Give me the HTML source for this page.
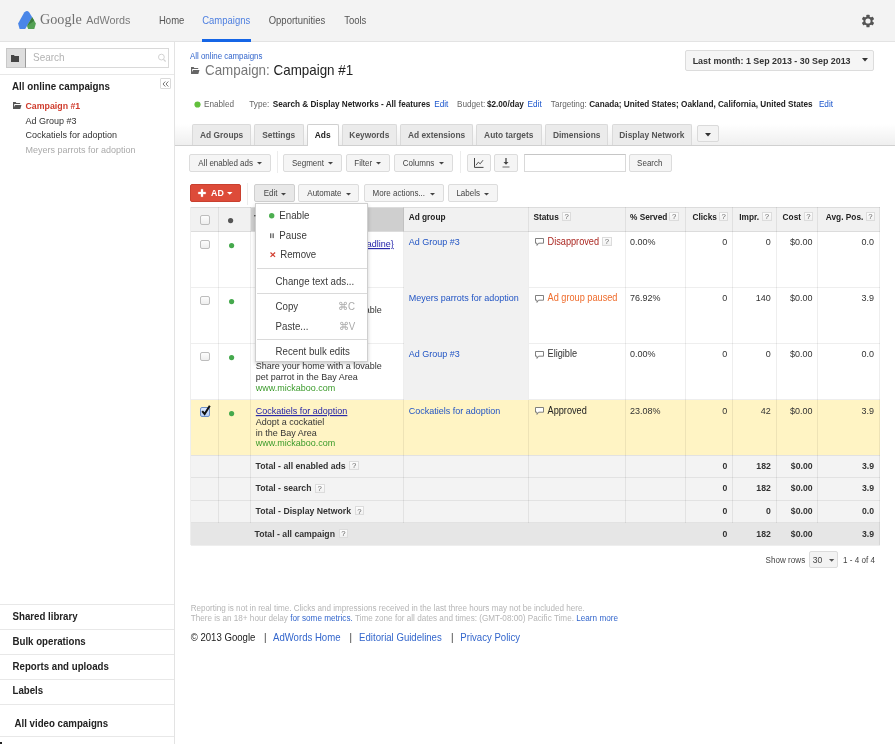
<!DOCTYPE html>
<html><head><meta charset="utf-8"><style>
html,body{margin:0;padding:0;}
body{width:895px;height:744px;position:relative;overflow:hidden;background:#fff;will-change:transform;font-family:"Liberation Sans",sans-serif;}
.t{position:absolute;white-space:nowrap;}
.r{position:absolute;box-sizing:border-box;}
svg{position:absolute;overflow:visible;}
</style></head><body>
<div class="r" style="left:0px;top:0px;width:895px;height:41px;background:#f3f3f3;"></div>
<div class="r" style="left:0px;top:41px;width:895px;height:1px;background:#e3e3e3;"></div>
<svg style="left:10px;top:5px" width="35" height="30" viewBox="0 0 35 30">
<path d="M14.2 7.6 Q16.7 4.6 19.3 7.4 L22.2 12.3 L15.2 23.9 L9.6 23.9 L8.1 18.6 Z" fill="#4a86e8"/>
<path d="M22.2 12.3 L25.9 18.6 L24.3 23.9 L18.1 23.9 L17.0 21.0 Z" fill="#54a154"/>
<path d="M22.2 12.3 L24.2 15.8 L17.6 20.6 L17.0 21.0 Z" fill="#3c7d3c"/>
</svg>
<div class="t" style="left:40.00px;top:10.21px;font-size:14.2px;line-height:18px;color:#707070;font-family:'Liberation Serif',serif;transform-origin:0 13.79px;">Google</div>
<div class="t" style="left:86.30px;top:13.26px;font-size:10.8px;line-height:14px;color:#7a7a7a;font-family:'Liberation Sans',sans-serif;transform:scaleY(1.04);transform-origin:0 10.74px;">AdWords</div>
<div class="t" style="left:159.00px;top:14.81px;font-size:9.5px;line-height:12px;color:#555;font-family:'Liberation Sans',sans-serif;transform:scaleY(1.09);transform-origin:0 9.29px;">Home</div>
<div class="t" style="left:202.20px;top:14.81px;font-size:9.5px;line-height:12px;color:#4d7fe0;font-family:'Liberation Sans',sans-serif;transform:scaleY(1.09);transform-origin:0 9.29px;">Campaigns</div>
<div class="t" style="left:268.70px;top:14.81px;font-size:9.5px;line-height:12px;color:#555;font-family:'Liberation Sans',sans-serif;transform:scaleY(1.09);transform-origin:0 9.29px;">Opportunities</div>
<div class="t" style="left:344.20px;top:14.81px;font-size:9.5px;line-height:12px;color:#555;font-family:'Liberation Sans',sans-serif;transform:scaleY(1.09);transform-origin:0 9.29px;">Tools</div>
<div class="r" style="left:202px;top:39px;width:48.5px;height:3px;background:#1565e6;"></div>
<svg style="left:860px;top:12.5px" width="16" height="16" viewBox="-8 -8 16 16">
<g fill="#555">
<circle r="4.6"/>
<rect x="-1.6" y="-6.3" width="3.2" height="12.6" rx="0.6"/>
<rect x="-1.6" y="-6.3" width="3.2" height="12.6" rx="0.6" transform="rotate(60)"/>
<rect x="-1.6" y="-6.3" width="3.2" height="12.6" rx="0.6" transform="rotate(120)"/>
</g><circle r="2.6" fill="#f3f3f3"/></svg>
<div class="r" style="left:174px;top:42px;width:1px;height:702px;background:#e3e3e3;"></div>
<div class="r" style="left:6px;top:48px;width:20px;height:20px;background:#dedede;border:1px solid #c9c9c9;border-right:1px solid #9a9a9a;"></div>
<div class="r" style="left:26px;top:48px;width:143px;height:20px;background:#fff;border:1px solid #d9d9d9;border-left:none;"></div>
<svg style="left:10.5px;top:55px" width="8" height="7" viewBox="0 0 8 7"><path d="M0 0 H3 L3.6 1 H8 V7 H0 Z" fill="#444"/></svg>
<div class="t" style="left:33.00px;top:50.53px;font-size:10px;line-height:13px;color:#b3b3b3;font-family:'Liberation Sans',sans-serif;transform:scaleY(1.09);transform-origin:0 9.97px;">Search</div>
<svg style="left:157px;top:53px" width="10" height="10" viewBox="0 0 10 10"><circle cx="4.4" cy="4.1" r="2.9" fill="none" stroke="#d2d2d2" stroke-width="1"/><path d="M6.5 6.3 L8.6 8.5" stroke="#d2d2d2" stroke-width="1.2"/></svg>
<div class="r" style="left:0px;top:74px;width:174px;height:1px;background:#e8e8e8;"></div>
<div class="r" style="left:160px;top:78px;width:11px;height:11px;border:1px solid #dadada;border-radius:1px;background:#fff;"></div>
<svg style="left:161.5px;top:80.5px" width="7" height="6" viewBox="0 0 7 6"><path d="M3.3 0.5 L1 3 L3.3 5.5 M6.3 0.5 L4 3 L6.3 5.5" fill="none" stroke="#666" stroke-width="0.9"/></svg>
<div class="t" style="left:12.00px;top:79.60px;font-size:9.8px;line-height:13px;color:#222;font-family:'Liberation Sans',sans-serif;font-weight:bold;transform:scaleY(1.09);transform-origin:0 9.90px;">All online campaigns</div>
<svg style="left:12.8px;top:102px" width="8.5" height="7" viewBox="0 0 8.5 7"><path d="M0 0 H2.6 L3.4 1.1 H7.2 V2.1 H1.2 V5 L2.2 2.9 H8.5 L7.3 7 H0 Z" fill="#555"/></svg>
<div class="t" style="left:25.50px;top:101.25px;font-size:8.8px;line-height:11px;color:#cf3b2c;font-family:'Liberation Sans',sans-serif;font-weight:bold;transform:scaleY(1.09);transform-origin:0 8.55px;">Campaign #1</div>
<div class="t" style="left:25.50px;top:114.88px;font-size:9.0px;line-height:12px;color:#333;font-family:'Liberation Sans',sans-serif;transform:scaleY(1.09);transform-origin:0 9.12px;">Ad Group #3</div>
<div class="t" style="left:25.50px;top:129.38px;font-size:9.0px;line-height:12px;color:#333;font-family:'Liberation Sans',sans-serif;transform:scaleY(1.09);transform-origin:0 9.12px;">Cockatiels for adoption</div>
<div class="t" style="left:25.50px;top:143.88px;font-size:9.0px;line-height:12px;color:#aaa;font-family:'Liberation Sans',sans-serif;transform:scaleY(1.09);transform-origin:0 9.12px;">Meyers parrots for adoption</div>
<div class="r" style="left:0px;top:604px;width:174px;height:1px;background:#e8e8e8;"></div>
<div class="r" style="left:0px;top:629px;width:174px;height:1px;background:#e8e8e8;"></div>
<div class="r" style="left:0px;top:654px;width:174px;height:1px;background:#e8e8e8;"></div>
<div class="r" style="left:0px;top:678.5px;width:174px;height:1.0px;background:#e8e8e8;"></div>
<div class="r" style="left:0px;top:703.5px;width:174px;height:1.0px;background:#e8e8e8;"></div>
<div class="r" style="left:0px;top:736px;width:174px;height:1px;background:#e8e8e8;"></div>
<div class="t" style="left:12.50px;top:610.24px;font-size:9.7px;line-height:13px;color:#222;font-family:'Liberation Sans',sans-serif;font-weight:bold;transform:scaleY(1.09);transform-origin:0 9.86px;">Shared library</div>
<div class="t" style="left:12.50px;top:634.84px;font-size:9.7px;line-height:13px;color:#222;font-family:'Liberation Sans',sans-serif;font-weight:bold;transform:scaleY(1.09);transform-origin:0 9.86px;">Bulk operations</div>
<div class="t" style="left:12.50px;top:659.54px;font-size:9.7px;line-height:13px;color:#222;font-family:'Liberation Sans',sans-serif;font-weight:bold;transform:scaleY(1.09);transform-origin:0 9.86px;">Reports and uploads</div>
<div class="t" style="left:12.50px;top:684.14px;font-size:9.7px;line-height:13px;color:#222;font-family:'Liberation Sans',sans-serif;font-weight:bold;transform:scaleY(1.09);transform-origin:0 9.86px;">Labels</div>
<div class="t" style="left:14.50px;top:717.24px;font-size:9.7px;line-height:13px;color:#222;font-family:'Liberation Sans',sans-serif;font-weight:bold;transform:scaleY(1.09);transform-origin:0 9.86px;">All video campaigns</div>
<div class="t" style="left:190.00px;top:51.86px;font-size:7.9px;line-height:10px;color:#3366cc;font-family:'Liberation Sans',sans-serif;transform:scaleY(1.09);transform-origin:0 7.74px;">All online campaigns</div>
<svg style="left:191px;top:67px" width="8.5" height="7" viewBox="0 0 8.5 7"><path d="M0 0 H2.6 L3.4 1.1 H7.2 V2.1 H1.2 V5 L2.2 2.9 H8.5 L7.3 7 H0 Z" fill="#666"/></svg>
<div class="t" style="left:205.00px;top:61.96px;font-size:13.4px;line-height:17px;color:#777;font-family:'Liberation Sans',sans-serif;transform:scaleY(1.09);transform-origin:0 13.14px;">Campaign:</div>
<div class="t" style="left:273.52px;top:61.96px;font-size:13.4px;line-height:17px;color:#222;font-family:'Liberation Sans',sans-serif;transform:scaleY(1.09);transform-origin:0 13.14px;">Campaign #1</div>
<div class="r" style="left:685px;top:50px;width:189px;height:21px;background:#f5f5f5;border:1px solid #dcdcdc;border-radius:2px;"></div>
<div class="t" style="left:692.70px;top:55.12px;font-size:8.9px;line-height:12px;color:#333;font-family:'Liberation Sans',sans-serif;font-weight:bold;transform:scaleY(1.09);transform-origin:0 9.08px;">Last month: 1 Sep 2013 - 30 Sep 2013</div>
<svg style="left:861.5px;top:58.3px" width="6" height="3.5" viewBox="0 0 6 3.5"><path d="M0 0 H6 L3 3.5 Z" fill="#333"/></svg>
<svg style="left:193.5px;top:101.3px" width="7" height="7" viewBox="0 0 7 7"><circle cx="3.5" cy="3.5" r="3.1" fill="#62c03c"/></svg>
<div class="t" style="left:204.00px;top:99.36px;font-size:8.2px;line-height:11px;color:#666;font-family:'Liberation Sans',sans-serif;transform:scaleY(1.09);transform-origin:0 8.34px;">Enabled</div>
<div class="t" style="left:249.30px;top:99.36px;font-size:8.2px;line-height:11px;color:#666;font-family:'Liberation Sans',sans-serif;transform:scaleY(1.09);transform-origin:0 8.34px;">Type:</div>
<div class="t" style="left:272.70px;top:99.36px;font-size:8.2px;line-height:11px;color:#222;font-family:'Liberation Sans',sans-serif;font-weight:bold;transform:scaleY(1.09);transform-origin:0 8.34px;">Search &amp; Display Networks - All features</div>
<div class="t" style="left:434.20px;top:99.36px;font-size:8.2px;line-height:11px;color:#1a55cc;font-family:'Liberation Sans',sans-serif;transform:scaleY(1.09);transform-origin:0 8.34px;">Edit</div>
<div class="t" style="left:457.00px;top:99.36px;font-size:8.2px;line-height:11px;color:#666;font-family:'Liberation Sans',sans-serif;transform:scaleY(1.09);transform-origin:0 8.34px;">Budget:</div>
<div class="t" style="left:486.90px;top:99.36px;font-size:8.2px;line-height:11px;color:#222;font-family:'Liberation Sans',sans-serif;font-weight:bold;transform:scaleY(1.09);transform-origin:0 8.34px;">$2.00/day</div>
<div class="t" style="left:527.60px;top:99.36px;font-size:8.2px;line-height:11px;color:#1a55cc;font-family:'Liberation Sans',sans-serif;transform:scaleY(1.09);transform-origin:0 8.34px;">Edit</div>
<div class="t" style="left:550.80px;top:99.36px;font-size:8.2px;line-height:11px;color:#666;font-family:'Liberation Sans',sans-serif;transform:scaleY(1.09);transform-origin:0 8.34px;">Targeting:</div>
<div class="t" style="left:589.20px;top:99.36px;font-size:8.2px;line-height:11px;color:#222;font-family:'Liberation Sans',sans-serif;font-weight:bold;transform:scaleY(1.09);transform-origin:0 8.34px;">Canada; United States; Oakland, California, United States</div>
<div class="t" style="left:818.90px;top:99.36px;font-size:8.2px;line-height:11px;color:#1a55cc;font-family:'Liberation Sans',sans-serif;transform:scaleY(1.09);transform-origin:0 8.34px;">Edit</div>
<div class="r" style="left:175px;top:124px;width:720px;height:21px;background:linear-gradient(#fff,#efefef);"></div>
<div class="r" style="left:175px;top:145px;width:720px;height:1px;background:#d0d0d0;"></div>
<div class="r" style="left:192px;top:124px;width:59px;height:21px;background:#ebebeb;border:1px solid #dadada;border-bottom:none;border-radius:2px 2px 0 0;"></div>
<div class="t" style="left:200.00px;top:129.79px;font-size:8.4px;line-height:11px;color:#555;font-weight:bold;transform:scaleY(1.09);transform-origin:50% 8.41px;">Ad Groups</div>
<div class="r" style="left:254px;top:124px;width:50px;height:21px;background:#ebebeb;border:1px solid #dadada;border-bottom:none;border-radius:2px 2px 0 0;"></div>
<div class="t" style="left:262.18px;top:129.79px;font-size:8.4px;line-height:11px;color:#555;font-weight:bold;transform:scaleY(1.09);transform-origin:50% 8.41px;">Settings</div>
<div class="r" style="left:307px;top:124px;width:32px;height:22px;background:#fff;border:1px solid #d0d0d0;border-bottom:none;border-radius:2px 2px 0 0;"></div>
<div class="t" style="left:314.72px;top:129.79px;font-size:8.4px;line-height:11px;color:#222;font-weight:bold;transform:scaleY(1.09);transform-origin:50% 8.41px;">Ads</div>
<div class="r" style="left:342px;top:124px;width:55px;height:21px;background:#ebebeb;border:1px solid #dadada;border-bottom:none;border-radius:2px 2px 0 0;"></div>
<div class="t" style="left:349.33px;top:129.79px;font-size:8.4px;line-height:11px;color:#555;font-weight:bold;transform:scaleY(1.09);transform-origin:50% 8.41px;">Keywords</div>
<div class="r" style="left:400px;top:124px;width:73px;height:21px;background:#ebebeb;border:1px solid #dadada;border-bottom:none;border-radius:2px 2px 0 0;"></div>
<div class="t" style="left:407.94px;top:129.79px;font-size:8.4px;line-height:11px;color:#555;font-weight:bold;transform:scaleY(1.09);transform-origin:50% 8.41px;">Ad extensions</div>
<div class="r" style="left:476px;top:124px;width:66px;height:21px;background:#ebebeb;border:1px solid #dadada;border-bottom:none;border-radius:2px 2px 0 0;"></div>
<div class="t" style="left:484.11px;top:129.79px;font-size:8.4px;line-height:11px;color:#555;font-weight:bold;transform:scaleY(1.09);transform-origin:50% 8.41px;">Auto targets</div>
<div class="r" style="left:545px;top:124px;width:63px;height:21px;background:#ebebeb;border:1px solid #dadada;border-bottom:none;border-radius:2px 2px 0 0;"></div>
<div class="t" style="left:552.94px;top:129.79px;font-size:8.4px;line-height:11px;color:#555;font-weight:bold;transform:scaleY(1.09);transform-origin:50% 8.41px;">Dimensions</div>
<div class="r" style="left:612px;top:124px;width:80px;height:21px;background:#ebebeb;border:1px solid #dadada;border-bottom:none;border-radius:2px 2px 0 0;"></div>
<div class="t" style="left:619.32px;top:129.79px;font-size:8.4px;line-height:11px;color:#555;font-weight:bold;transform:scaleY(1.09);transform-origin:50% 8.41px;">Display Network</div>
<div class="r" style="left:697px;top:125px;width:22px;height:17px;background:#f3f3f3;border:1px solid #dadada;border-radius:2px;"></div>
<svg style="left:705px;top:132.5px" width="6" height="3.5" viewBox="0 0 6 3.5"><path d="M0 0 H6 L3 3.5 Z" fill="#333"/></svg>
<div class="r" style="left:189px;top:154px;width:82px;height:18px;background:#f5f5f5;border:1px solid #dcdcdc;border-radius:2px;"></div>
<div class="t" style="left:198.30px;top:158.83px;font-size:8.0px;line-height:10px;color:#444;font-family:'Liberation Sans',sans-serif;transform:scaleY(1.09);transform-origin:0 7.77px;">All enabled ads</div>
<svg style="left:257px;top:161.8px" width="5" height="2.5" viewBox="0 0 6 3"><path d="M0 0 H6 L3 3 Z" fill="#444"/></svg>
<div class="r" style="left:276.5px;top:151px;width:1.0px;height:22px;background:#ececec;"></div>
<div class="r" style="left:283px;top:154px;width:59px;height:18px;background:#f5f5f5;border:1px solid #dcdcdc;border-radius:2px;"></div>
<div class="t" style="left:291.90px;top:158.83px;font-size:8.0px;line-height:10px;color:#444;font-family:'Liberation Sans',sans-serif;transform:scaleY(1.09);transform-origin:0 7.77px;">Segment</div>
<svg style="left:327.6px;top:161.8px" width="5" height="2.5" viewBox="0 0 6 3"><path d="M0 0 H6 L3 3 Z" fill="#444"/></svg>
<div class="r" style="left:346px;top:154px;width:44px;height:18px;background:#f5f5f5;border:1px solid #dcdcdc;border-radius:2px;"></div>
<div class="t" style="left:354.30px;top:158.83px;font-size:8.0px;line-height:10px;color:#444;font-family:'Liberation Sans',sans-serif;transform:scaleY(1.09);transform-origin:0 7.77px;">Filter</div>
<svg style="left:376.1px;top:161.8px" width="5" height="2.5" viewBox="0 0 6 3"><path d="M0 0 H6 L3 3 Z" fill="#444"/></svg>
<div class="r" style="left:394px;top:154px;width:59px;height:18px;background:#f5f5f5;border:1px solid #dcdcdc;border-radius:2px;"></div>
<div class="t" style="left:402.80px;top:158.83px;font-size:8.0px;line-height:10px;color:#444;font-family:'Liberation Sans',sans-serif;transform:scaleY(1.09);transform-origin:0 7.77px;">Columns</div>
<svg style="left:438.7px;top:161.8px" width="5" height="2.5" viewBox="0 0 6 3"><path d="M0 0 H6 L3 3 Z" fill="#444"/></svg>
<div class="r" style="left:459.6px;top:151px;width:1.0px;height:22px;background:#ececec;"></div>
<div class="r" style="left:467px;top:154px;width:24px;height:18px;background:#f5f5f5;border:1px solid #dcdcdc;border-radius:2px;"></div>
<svg style="left:473.5px;top:157.5px" width="10" height="10" viewBox="0 0 10 10"><path d="M0.5 0 V9.4 H9.5" fill="none" stroke="#444" stroke-width="1"/><path d="M2 7.2 L4.3 4.2 L6.2 5.8 L9 2.2" fill="none" stroke="#444" stroke-width="0.9"/></svg>
<div class="r" style="left:494px;top:154px;width:24px;height:18px;background:#f5f5f5;border:1px solid #dcdcdc;border-radius:2px;"></div>
<svg style="left:502px;top:157.5px" width="8" height="10" viewBox="0 0 8 10"><path d="M4 0 V5" stroke="#444" stroke-width="1.3"/><path d="M1.5 4 H6.5 L4 6.8 Z" fill="#444"/><path d="M0.5 9 H7.5" stroke="#777" stroke-width="1.1"/></svg>
<div class="r" style="left:524px;top:154px;width:102px;height:18px;background:#fff;border:1px solid #d9d9d9;border-top-color:#c6c6c6;"></div>
<div class="r" style="left:629px;top:154px;width:43px;height:18px;background:#f5f5f5;border:1px solid #dcdcdc;border-radius:2px;"></div>
<div class="t" style="left:637.10px;top:158.83px;font-size:8.0px;line-height:10px;color:#444;font-family:'Liberation Sans',sans-serif;transform:scaleY(1.09);transform-origin:0 7.77px;">Search</div>
<div class="r" style="left:190px;top:184px;width:51px;height:18px;background:#dd4b39;border:1px solid #c9402f;border-radius:2px;"></div>
<svg style="left:198.4px;top:189.3px" width="8" height="8" viewBox="0 0 8 8"><path d="M3 0.3 H5 V3 H7.7 V5 H5 V7.7 H3 V5 H0.3 V3 H3 Z" fill="#fff" stroke="#fff" stroke-width="0.3" stroke-linejoin="round"/></svg>
<div class="t" style="left:211.10px;top:188.25px;font-size:8.8px;line-height:11px;color:#fff;font-family:'Liberation Sans',sans-serif;font-weight:bold;transform:scaleY(1.09);transform-origin:0 8.55px;">AD</div>
<svg style="left:227.2px;top:192px" width="5.5" height="2.75" viewBox="0 0 6 3"><path d="M0 0 H6 L3 3 Z" fill="#fff"/></svg>
<div class="r" style="left:247.3px;top:182.7px;width:1.0px;height:22.100000000000023px;background:#ececec;"></div>
<div class="r" style="left:254px;top:184px;width:41px;height:18px;background:#e8e8e8;border:1px solid #cfcfcf;border-radius:2px;"></div>
<div class="t" style="left:263.70px;top:188.73px;font-size:8.0px;line-height:10px;color:#444;font-family:'Liberation Sans',sans-serif;transform:scaleY(1.09);transform-origin:0 7.77px;">Edit</div>
<svg style="left:280.6px;top:192.8px" width="5" height="2.5" viewBox="0 0 6 3"><path d="M0 0 H6 L3 3 Z" fill="#444"/></svg>
<div class="r" style="left:298px;top:184px;width:61px;height:18px;background:#f5f5f5;border:1px solid #dcdcdc;border-radius:2px;"></div>
<div class="t" style="left:307.30px;top:188.73px;font-size:8.0px;line-height:10px;color:#444;font-family:'Liberation Sans',sans-serif;transform:scaleY(1.09);transform-origin:0 7.77px;">Automate</div>
<svg style="left:346px;top:192.8px" width="5" height="2.5" viewBox="0 0 6 3"><path d="M0 0 H6 L3 3 Z" fill="#444"/></svg>
<div class="r" style="left:364px;top:184px;width:80px;height:18px;background:#f5f5f5;border:1px solid #dcdcdc;border-radius:2px;"></div>
<div class="t" style="left:372.60px;top:188.73px;font-size:8.0px;line-height:10px;color:#444;font-family:'Liberation Sans',sans-serif;transform:scaleY(1.09);transform-origin:0 7.77px;">More actions...</div>
<svg style="left:429.6px;top:192.8px" width="5" height="2.5" viewBox="0 0 6 3"><path d="M0 0 H6 L3 3 Z" fill="#444"/></svg>
<div class="r" style="left:448px;top:184px;width:50px;height:18px;background:#f5f5f5;border:1px solid #dcdcdc;border-radius:2px;"></div>
<div class="t" style="left:456.40px;top:188.73px;font-size:8.0px;line-height:10px;color:#444;font-family:'Liberation Sans',sans-serif;transform:scaleY(1.09);transform-origin:0 7.77px;">Labels</div>
<svg style="left:483.9px;top:192.8px" width="5" height="2.5" viewBox="0 0 6 3"><path d="M0 0 H6 L3 3 Z" fill="#444"/></svg>
<div class="r" style="left:190.5px;top:207px;width:689.0px;height:24.30000000000001px;background:#f1f1f1;"></div>
<div class="r" style="left:250.5px;top:207px;width:153.10000000000002px;height:24.30000000000001px;background:#cfcfcf;"></div>
<div class="r" style="left:190.5px;top:231.3px;width:689.0px;height:168.5px;background:#fff;"></div>
<div class="r" style="left:403.6px;top:231.3px;width:124.89999999999998px;height:168.5px;background:#f1f1f1;"></div>
<div class="r" style="left:190.5px;top:399.8px;width:689.0px;height:55.19999999999999px;background:#fff4c4;"></div>
<div class="r" style="left:190.5px;top:455px;width:689.0px;height:67.60000000000002px;background:#f3f3f3;"></div>
<div class="r" style="left:190.5px;top:522.6px;width:689.0px;height:22.5px;background:#e6e6e6;"></div>
<div class="r" style="left:190.5px;top:207px;width:689.0px;height:1px;background:#dcdcdc;"></div>
<div class="r" style="left:190.5px;top:231px;width:689.0px;height:1px;background:#dcdcdc;"></div>
<div class="r" style="left:190.5px;top:287.0px;width:213.10000000000002px;height:1.0px;background:rgba(0,0,0,0.065);"></div>
<div class="r" style="left:528.5px;top:287.0px;width:351.0px;height:1.0px;background:rgba(0,0,0,0.065);"></div>
<div class="r" style="left:190.5px;top:343.0px;width:213.10000000000002px;height:1.0px;background:rgba(0,0,0,0.065);"></div>
<div class="r" style="left:528.5px;top:343.0px;width:351.0px;height:1.0px;background:rgba(0,0,0,0.065);"></div>
<div class="r" style="left:190.5px;top:399.3px;width:213.10000000000002px;height:1.0px;background:rgba(0,0,0,0.065);"></div>
<div class="r" style="left:528.5px;top:399.3px;width:351.0px;height:1.0px;background:rgba(0,0,0,0.065);"></div>
<div class="r" style="left:190.5px;top:454.5px;width:689.0px;height:1.0px;background:rgba(0,0,0,0.065);"></div>
<div class="r" style="left:190.5px;top:477.0px;width:689.0px;height:1.0px;background:rgba(0,0,0,0.065);"></div>
<div class="r" style="left:190.5px;top:499.8px;width:689.0px;height:1.0px;background:rgba(0,0,0,0.065);"></div>
<div class="r" style="left:190.5px;top:522.1px;width:689.0px;height:1.0px;background:rgba(0,0,0,0.065);"></div>
<div class="r" style="left:190.0px;top:207px;width:1.0px;height:315.6px;background:rgba(0,0,0,0.065);"></div>
<div class="r" style="left:218.1px;top:207px;width:1.0px;height:315.6px;background:rgba(0,0,0,0.065);"></div>
<div class="r" style="left:250.0px;top:207px;width:1.0px;height:315.6px;background:rgba(0,0,0,0.065);"></div>
<div class="r" style="left:403.1px;top:207px;width:1.0px;height:315.6px;background:rgba(0,0,0,0.065);"></div>
<div class="r" style="left:528.0px;top:207px;width:1.0px;height:315.6px;background:rgba(0,0,0,0.065);"></div>
<div class="r" style="left:625.0px;top:207px;width:1.0px;height:315.6px;background:rgba(0,0,0,0.065);"></div>
<div class="r" style="left:684.9px;top:207px;width:1.0px;height:315.6px;background:rgba(0,0,0,0.065);"></div>
<div class="r" style="left:731.9px;top:207px;width:1.0px;height:315.6px;background:rgba(0,0,0,0.065);"></div>
<div class="r" style="left:775.6px;top:207px;width:1.0px;height:315.6px;background:rgba(0,0,0,0.065);"></div>
<div class="r" style="left:816.9px;top:207px;width:1.0px;height:315.6px;background:rgba(0,0,0,0.065);"></div>
<div class="r" style="left:879.0px;top:207px;width:1.0px;height:315.6px;background:rgba(0,0,0,0.065);"></div>
<div class="r" style="left:190.0px;top:522.6px;width:1.0px;height:22.5px;background:rgba(0,0,0,0.065);"></div>
<div class="r" style="left:879.0px;top:522.6px;width:1.0px;height:22.5px;background:rgba(0,0,0,0.065);"></div>
<div class="r" style="left:190.5px;top:544.6px;width:689.0px;height:1.0px;background:rgba(0,0,0,0.065);"></div>
<div class="r" style="left:200px;top:215px;width:10px;height:10px;background:linear-gradient(#fdfdfd,#eeeeee);border:1px solid #bdbdbd;border-radius:2px;"></div>
<svg style="left:228.1px;top:217.8px" width="5.2" height="5.2" viewBox="0 0 5.2 5.2"><circle cx="2.6" cy="2.6" r="2.6" fill="#555"/></svg>
<div class="t" style="left:408.70px;top:212.22px;font-size:8.3px;line-height:11px;color:#222;font-family:'Liberation Sans',sans-serif;font-weight:bold;transform:scaleY(1.09);transform-origin:0 8.38px;">Ad group</div>
<div class="t" style="left:533.40px;top:212.22px;font-size:8.3px;line-height:11px;color:#222;font-family:'Liberation Sans',sans-serif;font-weight:bold;transform:scaleY(1.09);transform-origin:0 8.38px;">Status</div>
<div class="r" style="left:562px;top:212px;width:9px;height:9px;border:1px solid #dcdcdc;background:linear-gradient(#fdfdfd,#f1f1f1);"></div>
<div class="t" style="left:564.38px;top:212.40px;font-size:7.8px;line-height:10px;color:#666;transform-origin:50% 7.70px;">?</div>
<div class="t" style="left:630.00px;top:212.22px;font-size:8.3px;line-height:11px;color:#222;font-family:'Liberation Sans',sans-serif;font-weight:bold;transform:scaleY(1.09);transform-origin:0 8.38px;">% Served</div>
<div class="r" style="left:669px;top:212px;width:10px;height:9px;border:1px solid #dcdcdc;background:linear-gradient(#fdfdfd,#f1f1f1);"></div>
<div class="t" style="left:671.88px;top:212.40px;font-size:7.8px;line-height:10px;color:#666;transform-origin:50% 7.70px;">?</div>
<div class="t" style="left:692.50px;top:212.22px;font-size:8.3px;line-height:11px;color:#222;font-family:'Liberation Sans',sans-serif;font-weight:bold;transform:scaleY(1.09);transform-origin:0 8.38px;">Clicks</div>
<div class="r" style="left:719px;top:212px;width:9px;height:9px;border:1px solid #dcdcdc;background:linear-gradient(#fdfdfd,#f1f1f1);"></div>
<div class="t" style="left:721.48px;top:212.40px;font-size:7.8px;line-height:10px;color:#666;transform-origin:50% 7.70px;">?</div>
<div class="t" style="left:739.30px;top:212.22px;font-size:8.3px;line-height:11px;color:#222;font-family:'Liberation Sans',sans-serif;font-weight:bold;transform:scaleY(1.09);transform-origin:0 8.38px;">Impr.</div>
<div class="r" style="left:762px;top:212px;width:10px;height:9px;border:1px solid #dcdcdc;background:linear-gradient(#fdfdfd,#f1f1f1);"></div>
<div class="t" style="left:764.78px;top:212.40px;font-size:7.8px;line-height:10px;color:#666;transform-origin:50% 7.70px;">?</div>
<div class="t" style="left:782.60px;top:212.22px;font-size:8.3px;line-height:11px;color:#222;font-family:'Liberation Sans',sans-serif;font-weight:bold;transform:scaleY(1.09);transform-origin:0 8.38px;">Cost</div>
<div class="r" style="left:804px;top:212px;width:9px;height:9px;border:1px solid #dcdcdc;background:linear-gradient(#fdfdfd,#f1f1f1);"></div>
<div class="t" style="left:806.28px;top:212.40px;font-size:7.8px;line-height:10px;color:#666;transform-origin:50% 7.70px;">?</div>
<div class="t" style="left:825.80px;top:212.22px;font-size:8.3px;line-height:11px;color:#222;font-family:'Liberation Sans',sans-serif;font-weight:bold;transform:scaleY(1.09);transform-origin:0 8.38px;">Avg. Pos.</div>
<div class="r" style="left:866px;top:212px;width:9px;height:9px;border:1px solid #dcdcdc;background:linear-gradient(#fdfdfd,#f1f1f1);"></div>
<div class="t" style="left:868.28px;top:212.40px;font-size:7.8px;line-height:10px;color:#666;transform-origin:50% 7.70px;">?</div>
<div class="r" style="left:200px;top:240px;width:10px;height:9px;background:linear-gradient(#fdfdfd,#eeeeee);border:1px solid #bdbdbd;border-radius:2px;"></div>
<svg style="left:229.0px;top:243.10000000000002px" width="5.2" height="5.2" viewBox="0 0 5.2 5.2"><circle cx="2.6" cy="2.6" r="2.6" fill="#45a94d"/></svg>
<div class="t" style="left:408.70px;top:236.28px;font-size:9.0px;line-height:12px;color:#2255c4;font-family:'Liberation Sans',sans-serif;transform:scaleY(1.09);transform-origin:0 9.12px;">Ad Group #3</div>
<svg style="left:535.2px;top:238.3px" width="9" height="8" viewBox="0 0 9 8"><path d="M0.5 0.5 H8.5 V5.2 H3.6 L2 7.4 V5.2 H0.5 Z" fill="#fff" stroke="#6a6a6a" stroke-width="0.85" stroke-linejoin="round"/></svg>
<div class="t" style="left:547.50px;top:236.21px;font-size:9.2px;line-height:12px;color:#ab2822;font-family:'Liberation Sans',sans-serif;transform:scaleY(1.09);transform-origin:0 9.19px;">Disapproved</div>
<div class="r" style="left:602px;top:237px;width:10px;height:9px;border:1px solid #dcdcdc;background:linear-gradient(#fdfdfd,#f1f1f1);"></div>
<div class="t" style="left:604.78px;top:236.90px;font-size:7.8px;line-height:10px;color:#666;transform-origin:50% 7.70px;">?</div>
<div class="t" style="left:630.00px;top:236.28px;font-size:9.0px;line-height:12px;color:#333;font-family:'Liberation Sans',sans-serif;transform:scaleY(1.09);transform-origin:0 9.12px;">0.00%</div>
<div class="t" style="right:167.70px;top:236.28px;font-size:9.0px;line-height:12px;color:#333;transform:scaleY(1.09);transform-origin:100% 9.12px;">0</div>
<div class="t" style="right:124.20px;top:236.28px;font-size:9.0px;line-height:12px;color:#333;transform:scaleY(1.09);transform-origin:100% 9.12px;">0</div>
<div class="t" style="right:82.40px;top:236.28px;font-size:9.0px;line-height:12px;color:#333;transform:scaleY(1.09);transform-origin:100% 9.12px;">$0.00</div>
<div class="t" style="right:20.90px;top:236.28px;font-size:9.0px;line-height:12px;color:#333;transform:scaleY(1.09);transform-origin:100% 9.12px;">0.0</div>
<div class="r" style="left:200px;top:296px;width:10px;height:9px;background:linear-gradient(#fdfdfd,#eeeeee);border:1px solid #bdbdbd;border-radius:2px;"></div>
<svg style="left:229.0px;top:299.29999999999995px" width="5.2" height="5.2" viewBox="0 0 5.2 5.2"><circle cx="2.6" cy="2.6" r="2.6" fill="#45a94d"/></svg>
<div class="t" style="left:408.70px;top:292.48px;font-size:9.0px;line-height:12px;color:#2255c4;font-family:'Liberation Sans',sans-serif;transform:scaleY(1.09);transform-origin:0 9.12px;">Meyers parrots for adoption</div>
<svg style="left:535.2px;top:294.5px" width="9" height="8" viewBox="0 0 9 8"><path d="M0.5 0.5 H8.5 V5.2 H3.6 L2 7.4 V5.2 H0.5 Z" fill="#fff" stroke="#6a6a6a" stroke-width="0.85" stroke-linejoin="round"/></svg>
<div class="t" style="left:547.50px;top:292.41px;font-size:9.2px;line-height:12px;color:#ef6c2c;font-family:'Liberation Sans',sans-serif;transform:scaleY(1.09);transform-origin:0 9.19px;">Ad group paused</div>
<div class="t" style="left:630.00px;top:292.48px;font-size:9.0px;line-height:12px;color:#333;font-family:'Liberation Sans',sans-serif;transform:scaleY(1.09);transform-origin:0 9.12px;">76.92%</div>
<div class="t" style="right:167.70px;top:292.48px;font-size:9.0px;line-height:12px;color:#333;transform:scaleY(1.09);transform-origin:100% 9.12px;">0</div>
<div class="t" style="right:124.20px;top:292.48px;font-size:9.0px;line-height:12px;color:#333;transform:scaleY(1.09);transform-origin:100% 9.12px;">140</div>
<div class="t" style="right:82.40px;top:292.48px;font-size:9.0px;line-height:12px;color:#333;transform:scaleY(1.09);transform-origin:100% 9.12px;">$0.00</div>
<div class="t" style="right:20.90px;top:292.48px;font-size:9.0px;line-height:12px;color:#333;transform:scaleY(1.09);transform-origin:100% 9.12px;">3.9</div>
<div class="r" style="left:200px;top:352px;width:10px;height:9px;background:linear-gradient(#fdfdfd,#eeeeee);border:1px solid #bdbdbd;border-radius:2px;"></div>
<svg style="left:229.0px;top:355.29999999999995px" width="5.2" height="5.2" viewBox="0 0 5.2 5.2"><circle cx="2.6" cy="2.6" r="2.6" fill="#45a94d"/></svg>
<div class="t" style="left:408.70px;top:348.48px;font-size:9.0px;line-height:12px;color:#2255c4;font-family:'Liberation Sans',sans-serif;transform:scaleY(1.09);transform-origin:0 9.12px;">Ad Group #3</div>
<svg style="left:535.2px;top:350.5px" width="9" height="8" viewBox="0 0 9 8"><path d="M0.5 0.5 H8.5 V5.2 H3.6 L2 7.4 V5.2 H0.5 Z" fill="#fff" stroke="#6a6a6a" stroke-width="0.85" stroke-linejoin="round"/></svg>
<div class="t" style="left:547.50px;top:348.41px;font-size:9.2px;line-height:12px;color:#333;font-family:'Liberation Sans',sans-serif;transform:scaleY(1.09);transform-origin:0 9.19px;">Eligible</div>
<div class="t" style="left:630.00px;top:348.48px;font-size:9.0px;line-height:12px;color:#333;font-family:'Liberation Sans',sans-serif;transform:scaleY(1.09);transform-origin:0 9.12px;">0.00%</div>
<div class="t" style="right:167.70px;top:348.48px;font-size:9.0px;line-height:12px;color:#333;transform:scaleY(1.09);transform-origin:100% 9.12px;">0</div>
<div class="t" style="right:124.20px;top:348.48px;font-size:9.0px;line-height:12px;color:#333;transform:scaleY(1.09);transform-origin:100% 9.12px;">0</div>
<div class="t" style="right:82.40px;top:348.48px;font-size:9.0px;line-height:12px;color:#333;transform:scaleY(1.09);transform-origin:100% 9.12px;">$0.00</div>
<div class="t" style="right:20.90px;top:348.48px;font-size:9.0px;line-height:12px;color:#333;transform:scaleY(1.09);transform-origin:100% 9.12px;">0.0</div>
<div class="r" style="left:200px;top:407px;width:10px;height:10px;background:linear-gradient(#dbe8ff,#b8cff5);border:1px solid #6e8fc7;border-radius:2px;"></div>
<svg style="left:201.3px;top:404.6px" width="10" height="11" viewBox="0 0 10 11"><path d="M1.2 6.2 L3.6 9 L8.8 0.8" fill="none" stroke="#111" stroke-width="2"/></svg>
<svg style="left:229.0px;top:411.09999999999997px" width="5.2" height="5.2" viewBox="0 0 5.2 5.2"><circle cx="2.6" cy="2.6" r="2.6" fill="#45a94d"/></svg>
<div class="t" style="left:408.70px;top:404.78px;font-size:9.0px;line-height:12px;color:#2255c4;font-family:'Liberation Sans',sans-serif;transform:scaleY(1.09);transform-origin:0 9.12px;">Cockatiels for adoption</div>
<svg style="left:535.2px;top:406.8px" width="9" height="8" viewBox="0 0 9 8"><path d="M0.5 0.5 H8.5 V5.2 H3.6 L2 7.4 V5.2 H0.5 Z" fill="#fff" stroke="#6a6a6a" stroke-width="0.85" stroke-linejoin="round"/></svg>
<div class="t" style="left:547.50px;top:404.71px;font-size:9.2px;line-height:12px;color:#222;font-family:'Liberation Sans',sans-serif;transform:scaleY(1.09);transform-origin:0 9.19px;">Approved</div>
<div class="t" style="left:630.00px;top:404.78px;font-size:9.0px;line-height:12px;color:#333;font-family:'Liberation Sans',sans-serif;transform:scaleY(1.09);transform-origin:0 9.12px;">23.08%</div>
<div class="t" style="right:167.70px;top:404.78px;font-size:9.0px;line-height:12px;color:#333;transform:scaleY(1.09);transform-origin:100% 9.12px;">0</div>
<div class="t" style="right:124.20px;top:404.78px;font-size:9.0px;line-height:12px;color:#333;transform:scaleY(1.09);transform-origin:100% 9.12px;">42</div>
<div class="t" style="right:82.40px;top:404.78px;font-size:9.0px;line-height:12px;color:#333;transform:scaleY(1.09);transform-origin:100% 9.12px;">$0.00</div>
<div class="t" style="right:20.90px;top:404.78px;font-size:9.0px;line-height:12px;color:#333;transform:scaleY(1.09);transform-origin:100% 9.12px;">3.9</div>
<div class="t" style="left:255.80px;top:238.28px;font-size:9.0px;line-height:12px;color:#1a1aa6;font-family:'Liberation Sans',sans-serif;transform:scaleY(1.09);transform-origin:0 9.12px;text-decoration:underline;">{KeyWord:Parrots Adopt Headline}</div>
<div class="t" style="left:255.80px;top:248.88px;font-size:9.0px;line-height:12px;color:#333;font-family:'Liberation Sans',sans-serif;transform:scaleY(1.09);transform-origin:0 9.12px;">Adopt a parrot</div>
<div class="t" style="left:255.80px;top:259.48px;font-size:9.0px;line-height:12px;color:#333;font-family:'Liberation Sans',sans-serif;transform:scaleY(1.09);transform-origin:0 9.12px;">in the Bay Area</div>
<div class="t" style="left:255.85px;top:270.08px;font-size:9.0px;line-height:12px;color:#3a9a2a;font-family:'Liberation Sans',sans-serif;transform:scaleY(1.09);transform-origin:0 9.12px;">www.mickaboo.com</div>
<div class="t" style="left:255.80px;top:293.38px;font-size:9.0px;line-height:12px;color:#1a1aa6;font-family:'Liberation Sans',sans-serif;transform:scaleY(1.09);transform-origin:0 9.12px;text-decoration:underline;">Meyers parrots</div>
<div class="t" style="left:255.80px;top:303.98px;font-size:9.0px;line-height:12px;color:#333;font-family:'Liberation Sans',sans-serif;transform:scaleY(1.09);transform-origin:0 9.12px;">Share your home with a lovable</div>
<div class="t" style="left:255.80px;top:314.58px;font-size:9.0px;line-height:12px;color:#333;font-family:'Liberation Sans',sans-serif;transform:scaleY(1.09);transform-origin:0 9.12px;">pet parrot in the Bay Area</div>
<div class="t" style="left:255.85px;top:325.18px;font-size:9.0px;line-height:12px;color:#3a9a2a;font-family:'Liberation Sans',sans-serif;transform:scaleY(1.09);transform-origin:0 9.12px;">www.mickaboo.com</div>
<div class="t" style="left:255.80px;top:349.78px;font-size:9.0px;line-height:12px;color:#1a1aa6;font-family:'Liberation Sans',sans-serif;transform:scaleY(1.09);transform-origin:0 9.12px;text-decoration:underline;">Ad Group #3</div>
<div class="t" style="left:255.80px;top:360.38px;font-size:9.0px;line-height:12px;color:#333;font-family:'Liberation Sans',sans-serif;transform:scaleY(1.09);transform-origin:0 9.12px;">Share your home with a lovable</div>
<div class="t" style="left:255.80px;top:370.98px;font-size:9.0px;line-height:12px;color:#333;font-family:'Liberation Sans',sans-serif;transform:scaleY(1.09);transform-origin:0 9.12px;">pet parrot in the Bay Area</div>
<div class="t" style="left:255.85px;top:381.58px;font-size:9.0px;line-height:12px;color:#3a9a2a;font-family:'Liberation Sans',sans-serif;transform:scaleY(1.09);transform-origin:0 9.12px;">www.mickaboo.com</div>
<div class="t" style="left:255.80px;top:405.48px;font-size:9.0px;line-height:12px;color:#1a1aa6;font-family:'Liberation Sans',sans-serif;transform:scaleY(1.09);transform-origin:0 9.12px;text-decoration:underline;">Cockatiels for adoption</div>
<div class="t" style="left:255.80px;top:416.08px;font-size:9.0px;line-height:12px;color:#333;font-family:'Liberation Sans',sans-serif;transform:scaleY(1.09);transform-origin:0 9.12px;">Adopt a cockatiel</div>
<div class="t" style="left:255.80px;top:426.68px;font-size:9.0px;line-height:12px;color:#333;font-family:'Liberation Sans',sans-serif;transform:scaleY(1.09);transform-origin:0 9.12px;">in the Bay Area</div>
<div class="t" style="left:255.85px;top:437.28px;font-size:9.0px;line-height:12px;color:#3a9a2a;font-family:'Liberation Sans',sans-serif;transform:scaleY(1.09);transform-origin:0 9.12px;">www.mickaboo.com</div>
<div class="t" style="left:255.60px;top:460.99px;font-size:8.7px;line-height:11px;color:#333;font-family:'Liberation Sans',sans-serif;font-weight:bold;transform:scaleY(1.09);transform-origin:0 8.51px;">Total - all enabled ads</div>
<div class="r" style="left:349px;top:461px;width:10px;height:9px;border:1px solid #dcdcdc;background:linear-gradient(#fdfdfd,#f1f1f1);"></div>
<div class="t" style="left:351.93px;top:461.20px;font-size:7.8px;line-height:10px;color:#666;transform-origin:50% 7.70px;">?</div>
<div class="t" style="right:167.70px;top:460.99px;font-size:8.7px;line-height:11px;color:#333;font-weight:bold;transform:scaleY(1.09);transform-origin:100% 8.51px;">0</div>
<div class="t" style="right:124.20px;top:460.99px;font-size:8.7px;line-height:11px;color:#333;font-weight:bold;transform:scaleY(1.09);transform-origin:100% 8.51px;">182</div>
<div class="t" style="right:82.40px;top:460.99px;font-size:8.7px;line-height:11px;color:#333;font-weight:bold;transform:scaleY(1.09);transform-origin:100% 8.51px;">$0.00</div>
<div class="t" style="right:20.90px;top:460.99px;font-size:8.7px;line-height:11px;color:#333;font-weight:bold;transform:scaleY(1.09);transform-origin:100% 8.51px;">3.9</div>
<div class="t" style="left:255.60px;top:483.49px;font-size:8.7px;line-height:11px;color:#333;font-family:'Liberation Sans',sans-serif;font-weight:bold;transform:scaleY(1.09);transform-origin:0 8.51px;">Total - search</div>
<div class="r" style="left:315px;top:484px;width:10px;height:9px;border:1px solid #dcdcdc;background:linear-gradient(#fdfdfd,#f1f1f1);"></div>
<div class="t" style="left:317.58px;top:483.70px;font-size:7.8px;line-height:10px;color:#666;transform-origin:50% 7.70px;">?</div>
<div class="t" style="right:167.70px;top:483.49px;font-size:8.7px;line-height:11px;color:#333;font-weight:bold;transform:scaleY(1.09);transform-origin:100% 8.51px;">0</div>
<div class="t" style="right:124.20px;top:483.49px;font-size:8.7px;line-height:11px;color:#333;font-weight:bold;transform:scaleY(1.09);transform-origin:100% 8.51px;">182</div>
<div class="t" style="right:82.40px;top:483.49px;font-size:8.7px;line-height:11px;color:#333;font-weight:bold;transform:scaleY(1.09);transform-origin:100% 8.51px;">$0.00</div>
<div class="t" style="right:20.90px;top:483.49px;font-size:8.7px;line-height:11px;color:#333;font-weight:bold;transform:scaleY(1.09);transform-origin:100% 8.51px;">3.9</div>
<div class="t" style="left:255.60px;top:506.29px;font-size:8.7px;line-height:11px;color:#333;font-family:'Liberation Sans',sans-serif;font-weight:bold;transform:scaleY(1.09);transform-origin:0 8.51px;">Total - Display Network</div>
<div class="r" style="left:355px;top:506px;width:9px;height:9px;border:1px solid #dcdcdc;background:linear-gradient(#fdfdfd,#f1f1f1);"></div>
<div class="t" style="left:357.23px;top:506.50px;font-size:7.8px;line-height:10px;color:#666;transform-origin:50% 7.70px;">?</div>
<div class="t" style="right:167.70px;top:506.29px;font-size:8.7px;line-height:11px;color:#333;font-weight:bold;transform:scaleY(1.09);transform-origin:100% 8.51px;">0</div>
<div class="t" style="right:124.20px;top:506.29px;font-size:8.7px;line-height:11px;color:#333;font-weight:bold;transform:scaleY(1.09);transform-origin:100% 8.51px;">0</div>
<div class="t" style="right:82.40px;top:506.29px;font-size:8.7px;line-height:11px;color:#333;font-weight:bold;transform:scaleY(1.09);transform-origin:100% 8.51px;">$0.00</div>
<div class="t" style="right:20.90px;top:506.29px;font-size:8.7px;line-height:11px;color:#333;font-weight:bold;transform:scaleY(1.09);transform-origin:100% 8.51px;">0.0</div>
<div class="t" style="left:254.50px;top:528.59px;font-size:8.7px;line-height:11px;color:#333;font-family:'Liberation Sans',sans-serif;font-weight:bold;transform:scaleY(1.09);transform-origin:0 8.51px;">Total - all campaign</div>
<div class="r" style="left:339px;top:529px;width:9px;height:9px;border:1px solid #dcdcdc;background:linear-gradient(#fdfdfd,#f1f1f1);"></div>
<div class="t" style="left:341.13px;top:528.80px;font-size:7.8px;line-height:10px;color:#666;transform-origin:50% 7.70px;">?</div>
<div class="t" style="right:167.70px;top:528.59px;font-size:8.7px;line-height:11px;color:#333;font-weight:bold;transform:scaleY(1.09);transform-origin:100% 8.51px;">0</div>
<div class="t" style="right:124.20px;top:528.59px;font-size:8.7px;line-height:11px;color:#333;font-weight:bold;transform:scaleY(1.09);transform-origin:100% 8.51px;">182</div>
<div class="t" style="right:82.40px;top:528.59px;font-size:8.7px;line-height:11px;color:#333;font-weight:bold;transform:scaleY(1.09);transform-origin:100% 8.51px;">$0.00</div>
<div class="t" style="right:20.90px;top:528.59px;font-size:8.7px;line-height:11px;color:#333;font-weight:bold;transform:scaleY(1.09);transform-origin:100% 8.51px;">3.9</div>
<div class="t" style="left:765.60px;top:554.69px;font-size:8.1px;line-height:11px;color:#444;font-family:'Liberation Sans',sans-serif;transform:scaleY(1.09);transform-origin:0 8.31px;">Show rows</div>
<div class="r" style="left:809px;top:551px;width:29px;height:17px;background:#f3f3f3;border:1px solid #dcdcdc;border-radius:2px;"></div>
<div class="t" style="left:812.70px;top:554.52px;font-size:8.6px;line-height:11px;color:#444;font-family:'Liberation Sans',sans-serif;transform:scaleY(1.09);transform-origin:0 8.48px;">30</div>
<svg style="left:828.7px;top:558.5px" width="5.3" height="2.65" viewBox="0 0 6 3"><path d="M0 0 H6 L3 3 Z" fill="#555"/></svg>
<div class="t" style="left:843.00px;top:554.69px;font-size:8.1px;line-height:11px;color:#444;font-family:'Liberation Sans',sans-serif;transform:scaleY(1.09);transform-origin:0 8.31px;">1 - 4 of 4</div>
<div class="t" style="left:190.70px;top:603.29px;font-size:8.1px;line-height:11px;color:#b5b5b5;font-family:'Liberation Sans',sans-serif;transform:scaleY(1.09);transform-origin:0 8.31px;">Reporting is not in real time. Clicks and impressions received in the last three hours may not be included here.</div>
<div class="t" style="left:190.70px;top:612.67px;font-size:8.17px;line-height:11px;color:#b5b5b5;font-family:'Liberation Sans',sans-serif;transform:scaleY(1.09);transform-origin:0 8.33px;">There is an 18+ hour delay <span style="color:#3366cc">for some metrics.</span> Time zone for all dates and times: (GMT-08:00) Pacific Time. <span style="color:#3366cc">Learn more</span></div>
<div class="t" style="left:190.70px;top:631.77px;font-size:9.6px;line-height:12px;color:#222;font-family:'Liberation Sans',sans-serif;transform:scaleY(1.09);transform-origin:0 9.33px;">© 2013 Google</div>
<div class="t" style="left:264.00px;top:631.77px;font-size:9.6px;line-height:12px;color:#333;font-family:'Liberation Sans',sans-serif;transform:scaleY(1.09);transform-origin:0 9.33px;">|</div>
<div class="t" style="left:273.00px;top:631.77px;font-size:9.6px;line-height:12px;color:#3366cc;font-family:'Liberation Sans',sans-serif;transform:scaleY(1.09);transform-origin:0 9.33px;">AdWords Home</div>
<div class="t" style="left:349.50px;top:631.77px;font-size:9.6px;line-height:12px;color:#333;font-family:'Liberation Sans',sans-serif;transform:scaleY(1.09);transform-origin:0 9.33px;">|</div>
<div class="t" style="left:359.10px;top:631.77px;font-size:9.6px;line-height:12px;color:#3366cc;font-family:'Liberation Sans',sans-serif;transform:scaleY(1.09);transform-origin:0 9.33px;">Editorial Guidelines</div>
<div class="t" style="left:451.00px;top:631.77px;font-size:9.6px;line-height:12px;color:#333;font-family:'Liberation Sans',sans-serif;transform:scaleY(1.09);transform-origin:0 9.33px;">|</div>
<div class="t" style="left:460.30px;top:631.77px;font-size:9.6px;line-height:12px;color:#3366cc;font-family:'Liberation Sans',sans-serif;transform:scaleY(1.09);transform-origin:0 9.33px;">Privacy Policy</div>
<div class="r" style="left:255px;top:203px;width:113px;height:159px;background:#fff;border:1px solid #cfcfcf;box-shadow:0 2px 4px rgba(0,0,0,0.2);"></div>
<svg style="left:269.0px;top:212.8px" width="5.4" height="5.4" viewBox="0 0 5.4 5.4"><circle cx="2.7" cy="2.7" r="2.7" fill="#4caf50"/></svg>
<div class="t" style="left:279.30px;top:209.14px;font-size:9.7px;line-height:13px;color:#3a3a3a;font-family:'Liberation Sans',sans-serif;transform:scaleY(1.09);transform-origin:0 9.86px;">Enable</div>
<svg style="left:269.9px;top:232.7px" width="4" height="5.3" viewBox="0 0 4 5.3"><rect x="0.2" y="0.3" width="1.1" height="4.8" fill="#444"/><rect x="2.6" y="0.3" width="1.1" height="4.8" fill="#444"/></svg>
<div class="t" style="left:279.30px;top:229.24px;font-size:9.7px;line-height:13px;color:#3a3a3a;font-family:'Liberation Sans',sans-serif;transform:scaleY(1.09);transform-origin:0 9.86px;">Pause</div>
<svg style="left:269.9px;top:252.4px" width="5.6" height="5.4" viewBox="0 0 5.6 5.4"><path d="M0.5 0.5 L5.1 4.9 M5.1 0.5 L0.5 4.9" stroke="#d23f31" stroke-width="1.2"/></svg>
<div class="t" style="left:280.20px;top:248.44px;font-size:9.7px;line-height:13px;color:#3a3a3a;font-family:'Liberation Sans',sans-serif;transform:scaleY(1.09);transform-origin:0 9.86px;">Remove</div>
<div class="r" style="left:256.6px;top:268.2px;width:110.09999999999997px;height:1.0px;background:#dadada;"></div>
<div class="t" style="left:275.60px;top:274.74px;font-size:9.7px;line-height:13px;color:#3a3a3a;font-family:'Liberation Sans',sans-serif;transform:scaleY(1.09);transform-origin:0 9.86px;">Change text ads...</div>
<div class="r" style="left:256.6px;top:293.3px;width:110.09999999999997px;height:1.0px;background:#dadada;"></div>
<div class="t" style="left:275.60px;top:300.14px;font-size:9.7px;line-height:13px;color:#3a3a3a;font-family:'Liberation Sans',sans-serif;transform:scaleY(1.09);transform-origin:0 9.86px;">Copy</div>
<div class="t" style="right:539.90px;top:300.14px;font-size:9.7px;line-height:13px;color:#aaa;transform:scaleY(1.09);transform-origin:100% 9.86px;">⌘C</div>
<div class="t" style="left:275.60px;top:320.44px;font-size:9.7px;line-height:13px;color:#3a3a3a;font-family:'Liberation Sans',sans-serif;transform:scaleY(1.09);transform-origin:0 9.86px;">Paste...</div>
<div class="t" style="right:539.90px;top:320.44px;font-size:9.7px;line-height:13px;color:#aaa;transform:scaleY(1.09);transform-origin:100% 9.86px;">⌘V</div>
<div class="r" style="left:256.6px;top:339.1px;width:110.09999999999997px;height:1.0px;background:#dadada;"></div>
<div class="t" style="left:275.60px;top:345.14px;font-size:9.7px;line-height:13px;color:#3a3a3a;font-family:'Liberation Sans',sans-serif;transform:scaleY(1.09);transform-origin:0 9.86px;">Recent bulk edits</div>
<svg style="left:253.6px;top:214.79999999999998px" width="1.6" height="1.6" viewBox="0 0 1.6 1.6"><circle cx="0.8" cy="0.8" r="0.8" fill="#333"/></svg>
<div class="r" style="left:0px;top:742px;width:1.5px;height:2px;background:#222;"></div>
</body></html>
